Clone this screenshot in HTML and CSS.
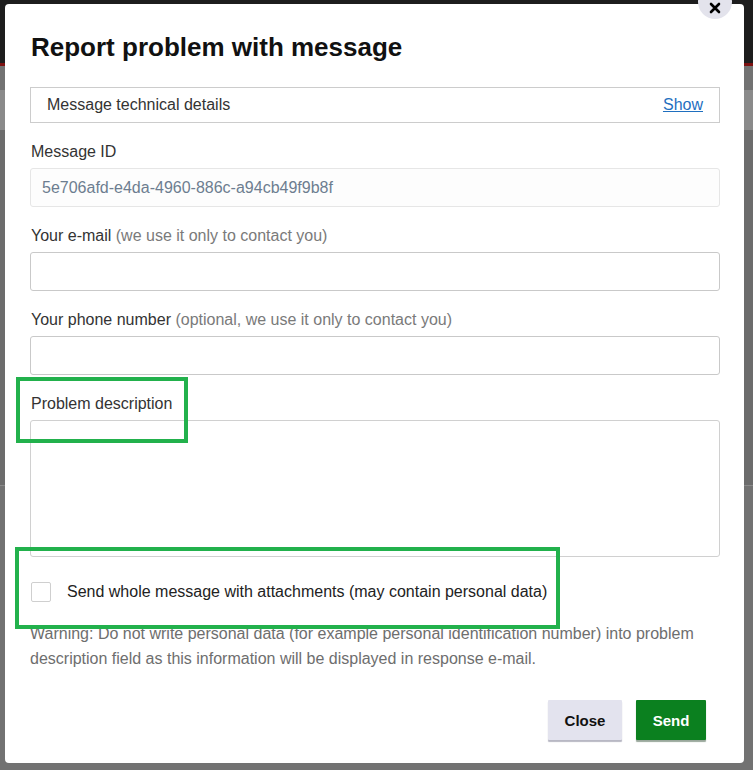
FILE: index.html
```html
<!DOCTYPE html>
<html>
<head>
<meta charset="utf-8">
<link rel="stylesheet" href="styles.css">
</head>
<body>
<div class="backdrop">
  <div class="bg-top"></div>
  <div class="bg-red"></div>
  <div class="bg-rest">
    <div class="bg-strip"></div>
    <div class="bg-mid"></div>
  </div>
</div>
<div class="modal">
  <button class="close-x" aria-label="Close">
    <svg width="12" height="12" viewBox="0 0 12 12"><path d="M2 2 L10 10 M10 2 L2 10" stroke="#000" stroke-width="2.6" stroke-linecap="round"/></svg>
  </button>
  <h1 class="title">Report problem with message</h1>
  <div class="details">
    <span>Message technical details</span>
    <a class="show" href="#">Show</a>
  </div>
  <div class="field">
    <label class="lbl">Message ID</label>
    <div class="input readonly">5e706afd-e4da-4960-886c-a94cb49f9b8f</div>
  </div>
  <div class="field">
    <label class="lbl">Your e-mail <span class="hint">(we use it only to contact you)</span></label>
    <div class="input"></div>
  </div>
  <div class="field">
    <label class="lbl">Your phone number <span class="hint">(optional, we use it only to contact you)</span></label>
    <div class="input"></div>
  </div>
  <div class="field field-last">
    <label class="lbl">Problem description</label>
    <div class="input textarea"></div>
  </div>
  <div class="check-row">
    <span class="checkbox"></span>
    <span>Send whole message with attachments (may contain personal data)</span>
  </div>
  <p class="warning">Warning: Do not write personal data (for example personal identification number) into problem description field as this information will be displayed in response e-mail.</p>
  <div class="buttons">
    <button class="btn btn-close">Close</button>
    <button class="btn btn-send">Send</button>
  </div>
</div>
<div class="mark mark1"></div>
<div class="mark mark2"></div>
</body>
</html>
```
FILE: styles.css
```css
html, body {
  margin: 0;
  padding: 0;
}
body {
  width: 753px;
  height: 770px;
  overflow: hidden;
  position: relative;
  background: #6e6e6e;
  font-family: "Liberation Sans", Arial, sans-serif;
  color: #222;
}
.backdrop {
  position: absolute;
  inset: 0;
  display: flex;
  flex-direction: column;
}
.bg-top {
  height: 63px;
  background: #1d1d1d;
}
.bg-red {
  height: 3px;
  background: #7c1010;
}
.bg-rest {
  flex: 1;
  background: #727272;
}
.bg-strip {
  height: 40px;
  margin-top: 24px;
  background: #8a8a8a;
}
.bg-mid {
  height: 355px;
  background: #6c6c6c;
  border-bottom: 1px solid #8a8a8a;
}
.modal {
  position: absolute;
  left: 5px;
  top: 4px;
  width: 690px;
  padding: 28px 24px 23px 25px;
  background: #fff;
  border-radius: 4px;
  display: flex;
  flex-direction: column;
}
.close-x {
  position: absolute;
  right: 12px;
  top: -19px;
  width: 34px;
  height: 34px;
  border-radius: 50%;
  border: none;
  background: #e3e3ec;
  display: flex;
  align-items: flex-end;
  justify-content: center;
  padding: 0 0 5px 0;
}
.title {
  margin: 0 0 25px 1px;
  font-size: 26px;
  font-weight: bold;
  line-height: 30px;
  color: #111;
}
.details {
  height: 34px;
  border: 1px solid #ccc;
  display: flex;
  align-items: center;
  justify-content: space-between;
  padding: 0 16px 0 16px;
  font-size: 16px;
  color: #333;
  margin-bottom: 19px;
}
.show {
  color: #1f6fbf;
  text-decoration: underline;
  font-size: 16px;
}
.field {
  display: flex;
  flex-direction: column;
  margin-bottom: 19px;
}
.field-last {
  margin-bottom: 25px;
}
.lbl {
  font-size: 16px;
  line-height: 20px;
  color: #333;
  margin-bottom: 6px;
  padding-left: 1px;
}
.hint {
  color: #7a7a7a;
}
.input {
  height: 37px;
  border: 1px solid #c9c9c9;
  border-radius: 3px;
  box-sizing: content-box;
  font-size: 16px;
  display: flex;
  align-items: center;
  padding: 0 11px;
}
.input.readonly {
  border-color: #e6e6e6;
  background: #fdfdfd;
  color: #6d7d90;
}
.input.textarea {
  height: 135px;
  border-color: #d0d0d0;
}
.check-row {
  display: flex;
  align-items: center;
  gap: 16px;
  font-size: 16px;
  color: #222;
  height: 20px;
  margin-bottom: 19px;
}
.checkbox {
  width: 18px;
  height: 18px;
  border: 1px solid #cfcfcf;
  border-radius: 2px;
  margin-left: 1px;
  background: #fff;
}
.warning {
  margin: 0 0 29px 0;
  font-size: 16px;
  line-height: 25px;
  color: #6e6e6e;
}
.buttons {
  display: flex;
  justify-content: flex-end;
  gap: 14px;
  padding-right: 14px;
}
.btn {
  height: 40px;
  border: none;
  font-family: "Liberation Sans", Arial, sans-serif;
  font-size: 15px;
  font-weight: bold;
  padding: 0 16px;
  border-radius: 1px;
}
.btn-close {
  width: 74px;
  background: #e3e3ee;
  color: #111;
  box-shadow: 0 2px 1px #b8b8c4;
}
.btn-send {
  width: 70px;
  background: #0b801f;
  color: #fff;
  box-shadow: 0 2px 1px #9aa89c;
}
.mark {
  position: absolute;
  border: 4px solid #22b14c;
  box-sizing: border-box;
}
.mark1 {
  left: 16px;
  top: 377px;
  width: 172px;
  height: 66px;
}
.mark2 {
  left: 15px;
  top: 547px;
  width: 545px;
  height: 82px;
}
```
